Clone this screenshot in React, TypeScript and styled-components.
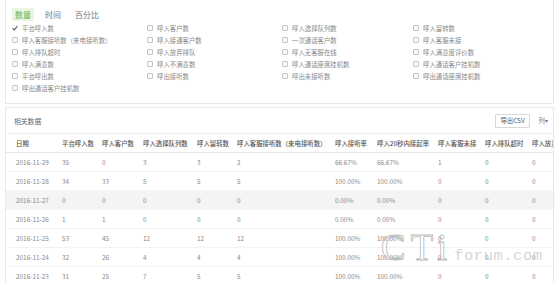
import React from "react";
import styled, { createGlobalStyle } from "styled-components";

const GlobalStyle = createGlobalStyle`
  html, body {
    margin: 0;
    padding: 0;
    background: #ffffff;
  }
  body {
    font-family: "Noto Sans CJK SC", "Noto Sans", sans-serif;
    color: #777;
    -webkit-font-smoothing: antialiased;
  }
`;

const Page = styled.div`
  position: relative;
  width: 558px;
  height: 283px;
  overflow: hidden;
  background: #fff;
`;

const FilterPanel = styled.section`
  margin: 0 4px 0 5px;
  border: 1px solid #e8e8e8;
  border-top: none;
  padding: 8px 6px 9px 6px;
`;

const Tabs = styled.div`
  display: flex;
  gap: 6px;
  height: 13px;
  margin-bottom: 1px;
`;

const Tab = styled.span<{ $active?: boolean }>`
  display: flex;
  align-items: center;
  padding: 0 3px;
  font-size: 8px;
  line-height: 13px;
  color: ${(p) => (p.$active ? "#62b04a" : "#777")};
  background: ${(p) => (p.$active ? "#e9f5e3" : "transparent")};
  border-radius: 1px;
  & + & {
    margin-left: 2px;
  }
`;

const CheckGrid = styled.div`
  display: grid;
  grid-template-columns: 135px 135px 131px 1fr;
  grid-auto-rows: 12px;
`;

const CheckItem = styled.label`
  display: flex;
  align-items: center;
  gap: 4px;
  font-size: 6.4px;
  color: #888;
  white-space: nowrap;
`;

const Box = styled.span`
  width: 4px;
  height: 4px;
  border: 1px solid #c4c4c4;
  border-radius: 1px;
  background: #fafafa;
  flex: none;
`;

const Tick = styled.svg`
  width: 6px;
  height: 6px;
  flex: none;
`;

const DataPanel = styled.section`
  margin: 3px 4px 0 5px;
  border: 1px solid #e8e8e8;
  border-bottom: none;
`;

const PanelHead = styled.div`
  display: flex;
  align-items: center;
  height: 25px;
  padding: 0 5px 0 8px;
  border-bottom: 1px solid #eeeeee;
`;

const PanelTitle = styled.span`
  flex: 1;
  font-size: 6.8px;
  color: #666;
`;

const ExportButton = styled.button`
  height: 14px;
  padding: 0 4px;
  border: 1px solid #d8d8d8;
  border-radius: 1px;
  background: #fff;
  font-family: inherit;
  font-size: 6.4px;
  color: #555;
  line-height: 12px;
`;

const ColumnMenu = styled.span`
  margin-left: 9px;
  font-size: 6.4px;
  color: #777;
`;

const TableWrap = styled.div`
  overflow: hidden;
`;

const Table = styled.table`
  border-collapse: collapse;
  table-layout: fixed;
  width: 586px;
`;

const HeadCell = styled.th`
  height: 18px;
  padding: 0;
  text-align: left;
  font-weight: 500;
  font-size: 6.4px;
  color: #555;
  white-space: nowrap;
  overflow: hidden;
  border-bottom: 1px solid #e6e6e6;
  &:first-child {
    padding-left: 10px;
  }
`;

const Row = styled.tr<{ $shade?: boolean }>`
  background: ${(p) => (p.$shade ? "#f4f4f4" : "#fff")};
`;

const Cell = styled.td`
  height: 18px;
  padding: 0;
  font-size: 6.4px;
  color: #888;
  white-space: nowrap;
  border-bottom: 1px solid #f3f3f3;
  &:first-child {
    padding-left: 10px;
  }
`;

const Watermark = styled.div`
  position: absolute;
  left: 381px;
  top: 226px;
  display: flex;
  align-items: baseline;
  pointer-events: none;
`;

const WatermarkLogo = styled.span`
  font-family: "Liberation Serif", serif;
  font-size: 37px;
  letter-spacing: 5px;
  color: rgba(255, 255, 255, 0.35);
  -webkit-text-stroke: 0.8px rgba(150, 150, 150, 0.7);
`;

const WatermarkSite = styled.span`
  margin-left: 2px;
  font-family: "Liberation Mono", monospace;
  font-size: 15.5px;
  letter-spacing: 0.5px;
  color: rgba(200, 200, 200, 0.75);
`;

const metrics = [
  "平台呼入数",
  "呼入客户数",
  "呼入选择队列数",
  "呼入留转数",
  "呼入客服接听数（来电接听数）",
  "呼入接通客户数",
  "一次通话客户数",
  "呼入客服未接",
  "呼入排队超时",
  "呼入放弃排队",
  "呼入无客服在线",
  "呼入满意度评价数",
  "呼入满意数",
  "呼入不满意数",
  "呼入通话座席挂机数",
  "呼入通话客户挂机数",
  "平台呼出数",
  "呼出接听数",
  "呼出未接听数",
  "呼出通话座席挂机数",
  "呼出通话客户挂机数",
];

const columns: [string, number][] = [
  ["日期", 56],
  ["平台呼入数", 40],
  ["呼入客户数", 41],
  ["呼入选择队列数", 54],
  ["呼入留转数", 40],
  ["呼入客服接听数（来电接听数）", 98],
  ["呼入接听率", 42],
  ["呼入20秒内接起率", 61],
  ["呼入客服未接", 47],
  ["呼入排队超时", 47],
  ["呼入放弃排队", 60],
];

const rows = [
  ["2016-11-29", "35", "0", "3", "3", "2", "66.67%", "66.67%", "1", "0", "0"],
  ["2016-11-28", "34", "33", "5", "5", "5", "100.00%", "100.00%", "0", "0", "0"],
  ["2016-11-27", "0", "0", "0", "0", "0", "0.00%", "0.00%", "0", "0", "0"],
  ["2016-11-26", "1", "1", "0", "0", "0", "0.00%", "0.00%", "0", "0", "0"],
  ["2016-11-25", "53", "45", "12", "12", "12", "100.00%", "100.00%", "0", "0", "0"],
  ["2016-11-24", "32", "26", "4", "4", "4", "100.00%", "100.00%", "0", "0", "0"],
  ["2016-11-23", "31", "25", "7", "5", "5", "100.00%", "100.00%", "0", "0", "0"],
];

const App: React.FC = () => (
  <Page>
    <GlobalStyle />
    <FilterPanel>
      <Tabs>
        <Tab $active>数量</Tab>
        <Tab>时间</Tab>
        <Tab>百分比</Tab>
      </Tabs>
      <CheckGrid>
        {metrics.map((m, i) => (
          <CheckItem key={m}>
            {i === 0 ? (
              <Tick viewBox="0 0 6 6">
                <path d="M0.6 3.2 L2.3 4.9 L5.4 1" fill="none" stroke="#555" strokeWidth="1.1" />
              </Tick>
            ) : (
              <Box />
            )}
            {m}
          </CheckItem>
        ))}
      </CheckGrid>
    </FilterPanel>
    <DataPanel>
      <PanelHead>
        <PanelTitle>相关数据</PanelTitle>
        <ExportButton>导出CSV</ExportButton>
        <ColumnMenu>列▾</ColumnMenu>
      </PanelHead>
      <TableWrap>
        <Table>
          <colgroup>
            {columns.map(([name, w]) => (
              <col key={name} style={{ width: w }} />
            ))}
          </colgroup>
          <thead>
            <tr>
              {columns.map(([name]) => (
                <HeadCell key={name}>{name}</HeadCell>
              ))}
            </tr>
          </thead>
          <tbody>
            {rows.map((r, i) => (
              <Row key={r[0]} $shade={i === 2}>
                {r.map((v, j) => (
                  <Cell key={j}>{v}</Cell>
                ))}
              </Row>
            ))}
          </tbody>
        </Table>
      </TableWrap>
    </DataPanel>
    <Watermark>
      <WatermarkLogo>CTi</WatermarkLogo>
      <WatermarkSite>forum.com</WatermarkSite>
    </Watermark>
  </Page>
);

export default App;
